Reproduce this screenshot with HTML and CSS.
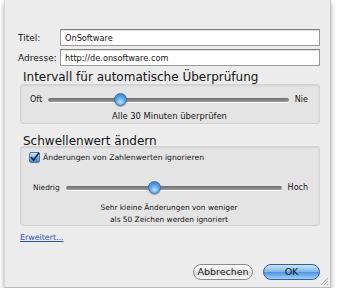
FILE: index.html
```html
<!DOCTYPE html>
<html lang="de">

<head>
    <meta charset="UTF-8">
    <title>Seite beobachten</title>
    <link rel="stylesheet" href="styles.css">
</head>

<body>
    <div class="sheet">
        <!-- Titel und Adresse -->
        <div class="field-row">
            <label for="titel">Titel:</label>
            <input type="text" id="titel" value="OnSoftware">
        </div>
        <div class="field-row">
            <label for="adresse">Adresse:</label>
            <input type="text" id="adresse" value="http://de.onsoftware.com">
        </div>

        <h2 class="group-title">Intervall für automatische Überprüfung</h2>
        <div class="group-box interval-box">
            <div class="slider-row">
                <span class="slider-label">Oft</span>
                <div class="track">
                    <span class="thumb" style="left: 30%;"></span>
                </div>
                <span class="slider-label">Nie</span>
            </div>
            <div class="slider-note">Alle 30 Minuten überprüfen</div>
        </div>

        <h2 class="group-title second">Schwellenwert ändern</h2>
        <div class="group-box threshold-box">
            <div class="check-row">
                <span class="checkbox">
                    <svg width="11" height="11" viewBox="0 0 11 11">
                        <path d="M2.5 5.5 L4.6 8.3 L9.6 1.2" fill="none" stroke="#1b2636" stroke-width="1.6" stroke-linecap="round" stroke-linejoin="round"/>
                    </svg>
                </span>
                <span>Änderungen von Zahlenwerten ignorieren</span>
            </div>
            <div class="slider-row low-high">
                <span class="slider-label">Niedrig</span>
                <div class="track">
                    <span class="thumb" style="left: 41%;"></span>
                </div>
                <span class="slider-label">Hoch</span>
            </div>
            <div class="slider-note">Sehr kleine Änderungen von weniger<br>als 50 Zeichen werden ignoriert</div>
        </div>

        <a class="more-link" href="#">Erweitert...</a>

        <div class="button-row">
            <button class="btn">Abbrechen</button>
            <button class="btn btn-default">OK</button>
        </div>

        <svg class="grip" width="10" height="10" viewBox="0 0 10 10">
            <path d="M9 2 L2 9 M9 5 L5 9 M9 8 L8 9" stroke="#a8a8a8" stroke-width="1"/>
        </svg>
    </div>
</body>

</html>
```

FILE: styles.css
```css
body {
    margin: 0;
    background: #ffffff;
    font-family: "DejaVu Sans", "Liberation Sans", sans-serif;
    font-size: 8px;
    color: #161616;
}

/* Das Sheet selbst */
.sheet {
    position: relative;
    width: 327px;
    height: 288px;
    margin-left: 4px;
    box-sizing: border-box;
    padding: 29px 10px 0 13px;
    background: #ececec;
    border-left: 1px solid #d8d8d8;
    border-right: 1px solid #c4c4c4;
    border-bottom: 1px solid #b8b8b8;
    box-shadow: 0 3px 5px rgba(0, 0, 0, 0.35);
}

.field-row {
    display: flex;
    align-items: center;
    height: 17px;
    margin-bottom: 3px;
}

.field-row label {
    width: 42px;
    font-size: 9px;
}

.field-row input {
    flex: 1;
    height: 17px;
    box-sizing: border-box;
    padding: 0 4px;
    border: 1px solid #9a9a9a;
    border-top-color: #7e7e7e;
    background: #ffffff;
    font-family: inherit;
    font-size: 8.2px;
    color: #161616;
    box-shadow: inset 0 1px 1px rgba(0, 0, 0, 0.12);
}

.group-title {
    margin: 5px 0 1px 5px;
    font-size: 12px;
    line-height: 12px;
    font-weight: normal;
    color: #141414;
}

.group-title.second {
    margin-top: 11px;
    margin-bottom: -1px;
}

.group-box {
    margin-left: 2px;
    border: 1px solid #d2d2d2;
    border-radius: 3px;
    background: #e4e4e4;
    box-shadow: inset 0 1px 2px rgba(0, 0, 0, 0.08);
}

.interval-box {
    height: 40px;
    box-sizing: border-box;
    padding: 8px 0 0 9px;
}

.threshold-box {
    height: 80px;
    box-sizing: border-box;
    padding: 5px 0 0 8px;
}

.slider-row {
    display: flex;
    align-items: center;
    gap: 6px;
    height: 13px;
    padding-right: 11px;
    font-size: 8px;
}

.track {
    position: relative;
    flex: 1;
    height: 4px;
    border-radius: 2px;
    background: linear-gradient(#6e6e6e, #9a9a9a);
    box-shadow: 0 1px 0 #ffffff;
}

.thumb {
    position: absolute;
    top: -5px;
    width: 13px;
    height: 13px;
    margin-left: -6px;
    border-radius: 50%;
    box-sizing: border-box;
    border: 1px solid #3f6fa8;
    background: radial-gradient(circle at 50% 70%, #b9e2ff 0, #5ea8ea 45%, #2f74c2 100%);
    box-shadow: 0 1px 1px rgba(0, 0, 0, 0.3);
}

.slider-note {
    margin-top: 4px;
    padding-right: 10px;
    text-align: center;
    font-size: 8.4px;
    line-height: 12px;
}

.check-row {
    display: flex;
    align-items: center;
    gap: 3px;
    height: 11px;
    font-size: 7.7px;
}

.checkbox {
    display: inline-block;
    width: 11px;
    height: 11px;
    box-sizing: border-box;
    border: 1px solid #4f79a8;
    border-radius: 2px;
    background: linear-gradient(#d6ecff, #6aaef0 55%, #3d86d4);
}

.checkbox svg {
    display: block;
    margin: -1px 0 0 -1px;
}

.low-high {
    margin-top: 18px;
    margin-left: 4px;
    padding-right: 11px;
}

.low-high .slider-label:first-child {
    font-size: 7.4px;
}

.threshold-box .slider-note {
    margin-top: 8px;
    font-size: 7.4px;
}

.more-link {
    display: block;
    width: max-content;
    margin: 6px 0 0 2px;
    font-size: 7.9px;
    line-height: 11px;
    color: #2a4fb8;
}

.button-row {
    display: flex;
    justify-content: flex-end;
    gap: 10px;
    margin-top: 21px;
}

.btn {
    width: 60px;
    height: 16px;
    padding: 0;
    border: 1px solid #8c8c8c;
    border-radius: 8px;
    background: linear-gradient(#ffffff, #eaeaea 50%, #dcdcdc 51%, #f8f8f8);
    font-family: inherit;
    font-size: 9.5px;
    color: #161616;
    line-height: 14px;
}

.btn-default {
    width: 57px;
    border-color: #375f93;
    background: linear-gradient(#c9e4fb, #7fb6ea 50%, #4c93de 51%, #9fd2fb);
}

.grip {
    position: absolute;
    right: 1px;
    bottom: 1px;
}
```
